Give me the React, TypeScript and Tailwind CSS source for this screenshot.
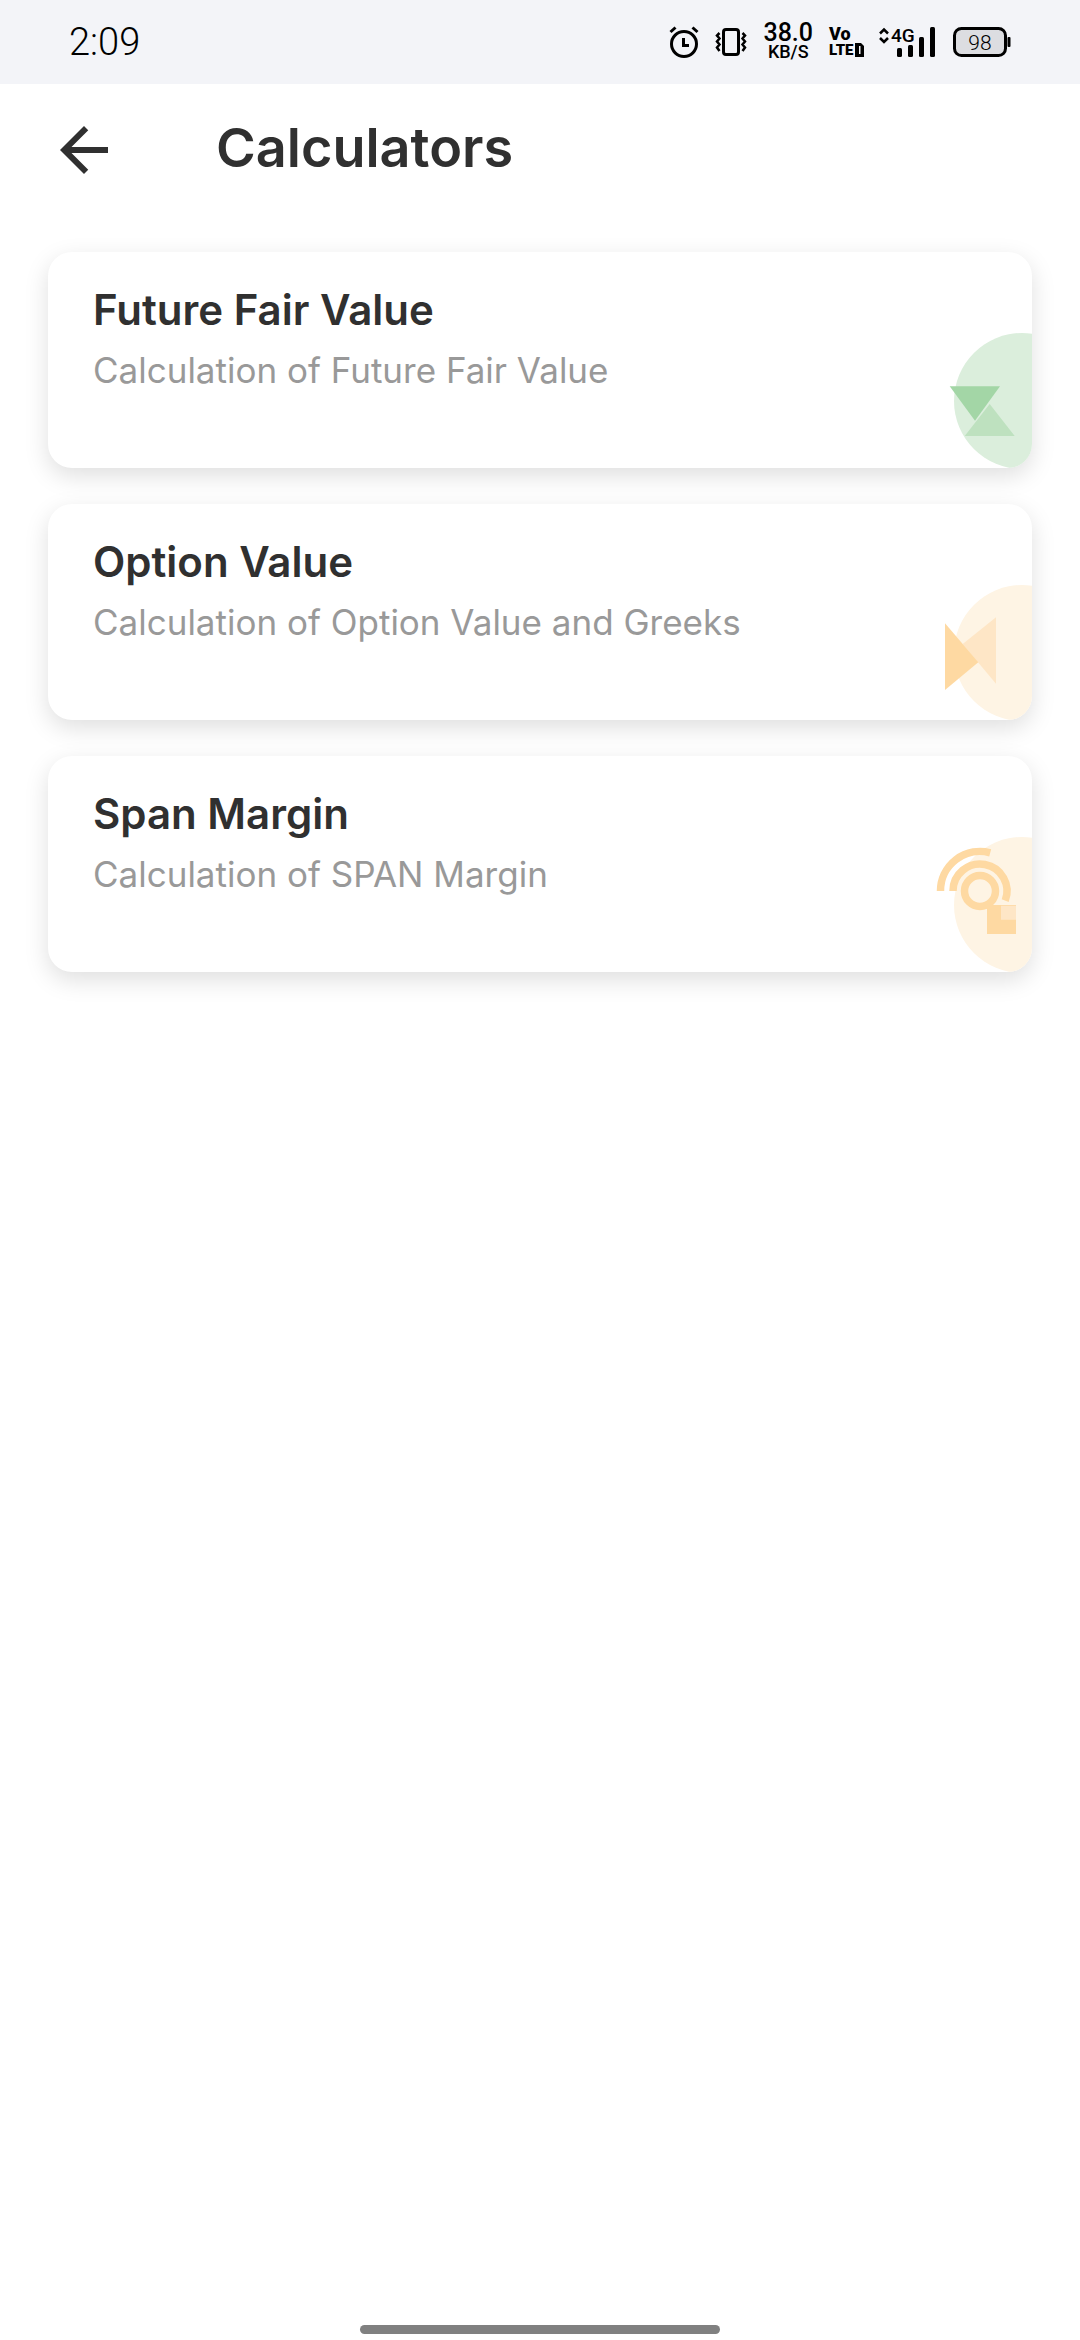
import React from 'react';

interface Calculator {
  id: string;
  title: string;
  description: string;
  art: React.ReactNode;
}

const calculators: Calculator[] = [
  {
    id: 'future-fair-value',
    title: 'Future Fair Value',
    description: 'Calculation of Future Fair Value',
    art: (
      <>
        <circle cx="90" cy="69" r="68" fill="#dbeedc" />
        <path d="M17.7 54.3H68L43 88.7z" fill="#a3d6a6" />
        <path d="M57.7 72l25 32h-50z" fill="#bee1bf" />
      </>
    ),
  },
  {
    id: 'option-value',
    title: 'Option Value',
    description: 'Calculation of Option Value and Greeks',
    art: (
      <>
        <circle cx="90" cy="69" r="68" fill="#fef4e4" />
        <path d="M64 33.3v66.4L30.7 60z" fill="#fee6c6" />
        <path d="M13 39.3V106l33.3-27.7z" fill="#fed9a2" />
      </>
    ),
  },
  {
    id: 'span-margin',
    title: 'Span Margin',
    description: 'Calculation of SPAN Margin',
    art: (
      <>
        <circle cx="90" cy="69" r="68" fill="#fef4e4" />
        <g fill="none" stroke="#fed9a2" strokeWidth="7.5">
          <circle cx="48" cy="55" r="15.5" />
          <path d="M21 55A27 27 0 1 1 73.2 64.7" />
          <path d="M8.5 55A39.5 39.5 0 0 1 58.2 16.8" />
        </g>
        <path d="M55 69h29v29H55z" fill="#fed9a2" />
        <path d="M69 69.7h15v14H69z" fill="#fee6c6" />
      </>
    ),
  },
];

const StatusBar: React.FC = () => (
  <div className="flex h-[84px] items-center bg-[#f3f4f8] pl-[69px] pr-[68px] font-['Roboto',sans-serif] text-black">
    <span className="text-[38px] leading-[44px] font-light">2:09</span>

    <div className="ml-auto flex items-center">
      {/* alarm */}
      <svg width="30" height="32" viewBox="0 0 30 32" fill="none" stroke="currentColor" strokeWidth="3">
        <circle cx="15" cy="18" r="12.5" />
        <path d="M14.5 12v7.5H20" />
        <path d="M1.5 6l5-4.5M28.5 6l-5-4.5" />
      </svg>
      {/* vibrate */}
      <svg className="ml-4" width="32" height="30" viewBox="0 0 32 30" fill="none" stroke="currentColor">
        <rect x="8.5" y="2.5" width="15" height="25" rx="2.5" strokeWidth="3" />
        <path
          d="M4.5 6L2 8.5l2.500 3L2 14.5l2.500 3L2 20.5 4.500 24M27.500 6L30 8.500l-2.500 3 2.500 3-2.500 3 2.500 3-2.500 3.500"
          strokeWidth="2.5"
        />
      </svg>
      <div className="ml-4 flex flex-col items-center font-medium">
        <span className="text-[25px] leading-[20px]">38.0</span>
        <span className="text-[18px] leading-[18px]">KB/S</span>
      </div>
      {/* volte */}
      <div className="ml-4 flex w-[35px] flex-col font-black">
        <span className="text-[18px] leading-[16px]">Vo</span>
        <span className="flex items-center justify-between text-[15px] leading-[16px]">
          LTE
          <svg width="9" height="14" viewBox="0 0 9 14" fill="currentColor">
            <path d="M0 0h6l3 3v11H0z" />
            <path d="M4 3h1.500v8H4z" fill="#f3f4f8" />
          </svg>
        </span>
      </div>
      {/* network */}
      <svg className="ml-[14px]" width="58" height="40" viewBox="0 -4 58 40" fill="currentColor">
        <path d="M2 7.5l4-4 4 4M2 12l4 4 4-4" fill="none" stroke="currentColor" strokeWidth="2.5" />
        <text x="13" y="16" fontSize="19" fontWeight="500">4G</text>
        <rect x="19" y="22" width="5" height="9" rx="1.5" />
        <rect x="30" y="19" width="5" height="12" rx="1.5" />
        <rect x="41" y="11" width="5" height="20" rx="1.5" />
        <rect x="52" y="1" width="5" height="30" rx="1.5" />
      </svg>
      {/* battery */}
      <svg className="ml-4" width="60" height="32" viewBox="0 0 60 32">
        <rect x="2.5" y="2.5" width="51" height="27" rx="7" fill="#dcdde1" stroke="currentColor" strokeWidth="3" />
        <rect x="55.5" y="11" width="3" height="10" rx="1" />
        <text x="28" y="23.5" textAnchor="middle" fontSize="21" fontWeight="300">98</text>
      </svg>
    </div>
  </div>
);

const App: React.FC = () => {
  return (
    <div className="flex min-h-screen flex-col bg-white font-['Inter',sans-serif] text-[#303030]">
      <StatusBar />

      <header className="flex h-[132px] items-center px-12">
        <button type="button" aria-label="Back">
          <svg width="72" height="72" viewBox="0 0 24 24" fill="currentColor">
            <path d="M20 11H7.83l5.59-5.59L12 4l-8 8 8 8 1.41-1.41L7.83 13H20v-2z" />
          </svg>
        </button>
        <h1 className="ml-24 pb-1 text-[54px] leading-[60px] font-semibold">Calculators</h1>
      </header>

      <main className="flex flex-col gap-9 px-12 pt-9">
        {calculators.map((calculator) => (
          <button
            key={calculator.id}
            type="button"
            className="flex h-[216px] w-full items-start justify-between overflow-hidden rounded-3xl bg-white text-left shadow-[0_8px_24px_rgba(0,0,0,0.13)]"
          >
            <span className="flex flex-col pt-8 pl-[45px]">
              <span className="text-[42px] leading-[52px] font-semibold">{calculator.title}</span>
              <span className="mt-2 text-[35px] leading-[52px] text-[#999999]">{calculator.description}</span>
            </span>
            <svg className="self-end" width="100" height="136" viewBox="0 0 100 136">
              {calculator.art}
            </svg>
          </button>
        ))}
      </main>

      <div className="mx-auto mt-auto mb-[6px] h-[9px] w-1/3 rounded-full bg-[#808080]" />
    </div>
  );
};

export default App;
